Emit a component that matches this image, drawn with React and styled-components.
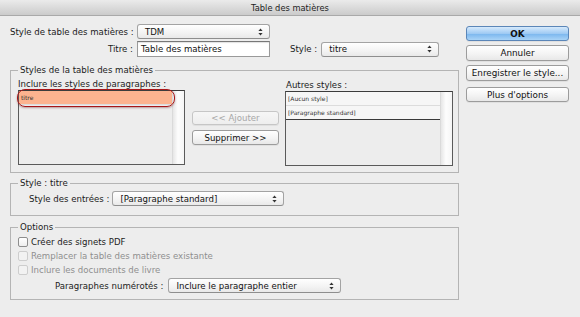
import React from "react";
import styled, { createGlobalStyle } from "styled-components";

const GlobalStyle = createGlobalStyle`
  html, body {
    margin: 0;
    padding: 0;
    background: #ededed;
  }
  body {
    font-family: "DejaVu Sans", "Liberation Sans", sans-serif;
    font-size: 8.6px;
    color: #1b1b1b;
  }
`;

const Window = styled.div`
  width: 580px;
  height: 317px;
  background: #ededed;
  overflow: hidden;
`;

const TitleBar = styled.div`
  height: 15px;
  border-bottom: 1px solid #a9a9a9;
  background: linear-gradient(#ebebeb, #cbcbcb);
  display: flex;
  align-items: center;
  justify-content: center;
  font-size: 8.3px;
  color: #1e1e1e;
`;

const Body = styled.div`
  display: flex;
  gap: 7px;
  padding: 8px 0 0 10px;
`;

const Main = styled.div`
  width: 449px;
  display: flex;
  flex-direction: column;
`;

const Side = styled.div`
  width: 103px;
  display: flex;
  flex-direction: column;
  padding-top: 2px;
`;

const Row = styled.div`
  display: flex;
  align-items: center;
  height: ${(p) => p.$h || 15}px;
  margin-top: ${(p) => p.$mt || 0}px;
  padding-left: ${(p) => p.$pl || 0}px;
  color: ${(p) => (p.$disabled ? "#8f8f8f" : "inherit")};
`;

const Label = styled.span`
  width: ${(p) => (p.$w ? `${p.$w}px` : "auto")};
  text-align: right;
  margin-left: ${(p) => p.$ml || 0}px;
  margin-right: ${(p) => (p.$mr === undefined ? 4 : p.$mr)}px;
  white-space: nowrap;
`;

const SelectBox = styled.div`
  width: ${(p) => p.$w}px;
  height: 15px;
  box-sizing: border-box;
  border: 1px solid #a3a3a3;
  border-bottom-color: #8e8e8e;
  border-radius: 3px;
  background: linear-gradient(#ffffff, #f3f3f3 60%, #e9e9e9);
  display: flex;
  align-items: center;
  justify-content: space-between;
  padding: 0 6px 0 ${(p) => p.$pl || 7}px;
  white-space: nowrap;
  color: #111;
`;

const TextInput = styled.div`
  width: ${(p) => p.$w}px;
  height: 16px;
  box-sizing: border-box;
  border: 1px solid #9a9a9a;
  border-top-color: #777;
  background: #fff;
  box-shadow: inset 0 1px 1px rgba(0, 0, 0, 0.12);
  display: flex;
  align-items: center;
  padding-left: 3px;
  color: #111;
`;

const Button = styled.button`
  width: ${(p) => p.$w || 103}px;
  height: ${(p) => p.$h || 15}px;
  margin-top: ${(p) => p.$mt || 0}px;
  padding: 0;
  box-sizing: border-box;
  font-family: inherit;
  font-size: ${(p) => p.$fs || 8.6}px;
  font-weight: ${(p) => (p.$primary ? "bold" : "normal")};
  color: ${(p) => (p.disabled ? "#a8a8a8" : "#111")};
  border: 1px solid
    ${(p) => (p.$primary ? "#5b86b8" : p.disabled ? "#c6c6c6" : "#9c9c9c")};
  border-radius: 3px;
  background: ${(p) =>
    p.$primary
      ? "linear-gradient(#d6eafc, #9fcaf3 50%, #7ab6ee 52%, #a9d3f7)"
      : p.disabled
      ? "linear-gradient(#f6f6f6, #eeeeee)"
      : "linear-gradient(#ffffff, #f4f4f4 55%, #e8e8e8)"};
  box-shadow: 0 1px 0 rgba(0, 0, 0, 0.05);
`;

const Group = styled.fieldset`
  margin: ${(p) => p.$mt || 0}px 0 0 0;
  padding: ${(p) => p.$pt || 3}px 5px ${(p) => p.$pb || 7}px 7px;
  border: 1px solid #b4b4b4;
  min-width: 0;
`;

const Legend = styled.legend`
  padding: 0 2px;
  line-height: 10px;
  color: #1b1b1b;
`;

const Columns = styled.div`
  display: flex;
`;

const Column = styled.div`
  display: flex;
  flex-direction: column;
  margin-left: ${(p) => p.$ml || 0}px;
  padding-top: ${(p) => p.$pt || 0}px;
`;

const ColLabel = styled.div`
  line-height: 10px;
  height: 10px;
  margin-bottom: 1px;
  padding-left: ${(p) => p.$pl || 0}px;
  padding-top: ${(p) => p.$pt || 0}px;
  white-space: nowrap;
`;

const ListBox = styled.div`
  position: relative;
  width: ${(p) => p.$w}px;
  height: 75px;
  box-sizing: border-box;
  border: 1px solid #5a5a5a;
  border-top-color: #3c3c3c;
  background: #ededed;
  display: flex;
`;

const ListItems = styled.div`
  flex: 1;
  display: flex;
  flex-direction: column;
`;

const ScrollTrack = styled.div`
  width: 11px;
  background: linear-gradient(to right, #e6e6e6, #fdfdfd 45%, #f5f5f5);
  border-left: 1px solid #dadada;
`;

const ListItem = styled.div`
  height: 13px;
  display: flex;
  align-items: center;
  padding-left: 2px;
  font-size: 6px;
  color: #333;
  background: ${(p) => (p.$selected ? "#fcb38f" : "#f6f6f6")};
  border-bottom: 1px solid ${(p) => (p.$dark ? "#3a3a3a" : "#dcdcdc")};
`;

const Ellipse = styled.div`
  position: absolute;
  left: -2px;
  top: -2px;
  width: 156px;
  height: 16px;
  border: 1.5px solid #a8171a;
  border-radius: 8px;
  box-shadow: 0 1px 2px rgba(90, 0, 0, 0.35);
  pointer-events: none;
`;

const Check = styled.span`
  width: 10px;
  height: 10px;
  box-sizing: border-box;
  border: 1px solid ${(p) => (p.$disabled ? "#cdcdcd" : "#8d8d8d")};
  border-radius: 2px;
  background: ${(p) =>
    p.$disabled ? "#f2f2f2" : "linear-gradient(#ffffff, #eeeeee)"};
  margin-right: 3px;
`;

const Arrows = () => (
  <svg width="5" height="8" viewBox="0 0 5 8">
    <path d="M2.5 0.5 L4.6 3 L0.4 3 Z" fill="#333" />
    <path d="M2.5 7.5 L4.6 5 L0.4 5 Z" fill="#333" />
  </svg>
);

const Select = ({ w, children, pl }) => (
  <SelectBox $w={w} $pl={pl}>
    <span>{children}</span>
    <Arrows />
  </SelectBox>
);

export default function App() {
  return (
    <Window>
      <GlobalStyle />
      <TitleBar>Table des matières</TitleBar>
      <Body>
        <Main>
          <Row>
            <Label $w={123}>Style de table des matières :</Label>
            <Select w={133}>TDM</Select>
          </Row>
          <Row $h={16} $mt={2}>
            <Label $w={123}>Titre :</Label>
            <TextInput $w={133}>Table des matières</TextInput>
            <Label $ml={20}>Style :</Label>
            <Select w={118}>titre</Select>
          </Row>

          <Group $mt={8} $pt={4} $pb={6}>
            <Legend>Styles de la table des matières</Legend>
            <Columns>
              <Column>
                <ColLabel>Inclure les styles de paragraphes :</ColLabel>
                <ListBox $w={167}>
                  <ListItems>
                    <ListItem $selected>titre</ListItem>
                  </ListItems>
                  <ScrollTrack />
                  <Ellipse />
                </ListBox>
              </Column>
              <Column $ml={7} $pt={32}>
                <Button $w={87} $h={14} disabled>
                  &lt;&lt; Ajouter
                </Button>
                <Button $w={87} $mt={5}>
                  Supprimer &gt;&gt;
                </Button>
              </Column>
              <Column $ml={6}>
                <ColLabel $pl={1} $pt={1}>
                  Autres styles :
                </ColLabel>
                <ListBox $w={168}>
                  <ListItems>
                    <ListItem>[Aucun style]</ListItem>
                    <ListItem $dark>[Paragraphe standard]</ListItem>
                  </ListItems>
                  <ScrollTrack />
                </ListBox>
              </Column>
            </Columns>
          </Group>

          <Group $mt={5} $pt={3} $pb={9}>
            <Legend>Style : titre</Legend>
            <Row $pl={11}>
              <Label $mr={3}>Style des entrées :</Label>
              <Select w={172}>[Paragraphe standard]</Select>
            </Row>
          </Group>

          <Group $mt={6} $pt={3} $pb={6}>
            <Legend>Options</Legend>
            <Row $h={14}>
              <Check />
              Créer des signets PDF
            </Row>
            <Row $h={14} $disabled>
              <Check $disabled />
              Remplacer la table des matières existante
            </Row>
            <Row $h={14} $disabled>
              <Check $disabled />
              Inclure les documents de livre
            </Row>
            <Row $mt={1} $pl={37}>
              <Label $mr={5}>Paragraphes numérotés :</Label>
              <Select w={173}>Inclure le paragraphe entier</Select>
            </Row>
          </Group>
        </Main>

        <Side>
          <Button $primary $h={15} $fs={8.8}>
            OK
          </Button>
          <Button $h={16} $mt={4} $fs={8.8}>
            Annuler
          </Button>
          <Button $h={16} $mt={4} $fs={8.8}>
            Enregistrer le style...
          </Button>
          <Button $h={15} $mt={6} $fs={8.8}>
            Plus d'options
          </Button>
        </Side>
      </Body>
    </Window>
  );
}
